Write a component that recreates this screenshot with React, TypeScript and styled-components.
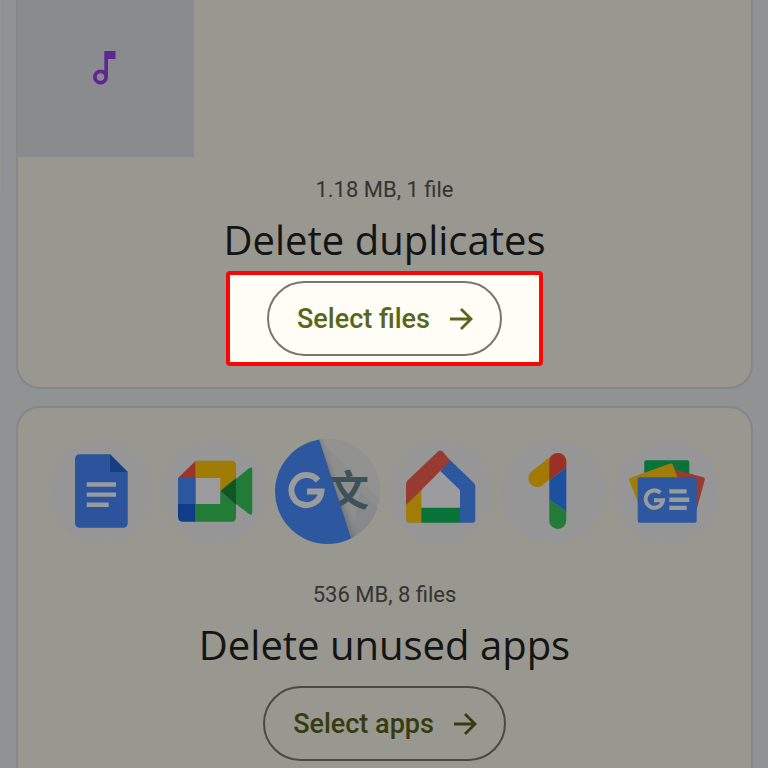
import type { ReactNode } from "react";
import styled, { createGlobalStyle } from "styled-components";

const GlobalStyle = createGlobalStyle`
  * { box-sizing: border-box; }
  body {
    margin: 0;
    background: #8f9393;
    font-family: Roboto, sans-serif;
  }
`;

const Page = styled.div`
  display: flex;
  gap: 13px;
  height: 100vh;
  overflow: hidden;
  padding-right: 15px;
`;

const PreviousPanel = styled.div`
  flex: none;
  width: 3px;
  height: 190px;
  background: #939490;
  border-right: 1px solid #8c8f8e;
`;

const CardList = styled.main`
  flex: 1;
  display: flex;
  flex-direction: column;
  gap: 17px;
  min-width: 0;
`;

const Card = styled.section<{ $continued?: boolean }>`
  flex: none;
  display: flex;
  flex-direction: column;
  align-items: center;
  padding: ${(p) => (p.$continued ? "0 0 21px" : "31px 0 21px")};
  border: 2px solid #868786;
  border-top-width: ${(p) => (p.$continued ? "0" : "2px")};
  border-radius: ${(p) => (p.$continued ? "0 0 24px 24px" : "24px")};
  background: #989790;
  overflow: hidden;
`;

const FileTile = styled.div`
  align-self: flex-start;
  display: flex;
  width: 176px;
  height: 157px;
  padding: 46px 0 0 69px;
  background: #898b8e;
`;

const AppRow = styled.div`
  display: flex;
  justify-content: center;
  gap: 8px;
  padding-right: 1px;
`;

const AppIcon = styled.svg`
  width: 105px;
  height: 105px;
`;

const Meta = styled.p<{ $gap: number }>`
  margin: ${(p) => p.$gap}px 0 0;
  font-size: 22px;
  line-height: 28px;
  color: #343430;
`;

const Title = styled.h2`
  margin: 8px 0 0;
  font-family: "Open Sans", sans-serif;
  font-size: 40px;
  line-height: 56px;
  font-weight: 400;
  color: #141414;
`;

const ActionFrame = styled.div<{ $highlighted?: boolean }>`
  margin-top: 3px;
  padding: 6px 37px;
  border: 4px solid ${(p) => (p.$highlighted ? "#fb0505" : "transparent")};
  border-radius: 4px;
  background: ${(p) => (p.$highlighted ? "#fffdf6" : "transparent")};
`;

const ActionButton = styled.button<{ $highlighted?: boolean }>`
  display: flex;
  align-items: center;
  gap: 18px;
  height: 75px;
  padding: 0 26px 0 28px;
  border: 2px solid ${(p) => (p.$highlighted ? "#77776b" : "#4a4a43")};
  border-radius: 38px;
  background: transparent;
  color: ${(p) => (p.$highlighted ? "#58661b" : "#353d10")};
  font-family: Roboto, sans-serif;
  font-size: 27px;
  font-weight: 500;
  line-height: 36px;
  white-space: nowrap;
`;

const Arrow = () => (
  <svg width="26" height="26" viewBox="0 0 26 26" fill="none" stroke="currentColor" strokeWidth="2.8" aria-hidden="true">
    <path d="M2 13H23M13 3L23 13L13 23" />
  </svg>
);

const MusicNote = () => (
  <svg width="34" height="44" viewBox="0 0 34 44" role="img" aria-label="Audio file">
    <circle cx="13.5" cy="31" r="5.6" fill="none" stroke="#5c2791" strokeWidth="3.8" />
    <path d="M17.3 5H28.5V13H21V31H17.3Z" fill="#5c2791" />
  </svg>
);

const Disc = () => <circle cx="52.5" cy="52.5" r="51.5" fill="#969697" />;

const DocsIcon = () => (
  <AppIcon viewBox="0 0 105 105" role="img" aria-label="Docs">
    <Disc />
    <path d="M31 15.3H61L78.7 33V84Q78.7 88.7 74 88.7H31Q26 88.7 26 84V20Q26 15.3 31 15.3Z" fill="#2b549c" />
    <path d="M61 15.3L78.7 33H61Z" fill="#173f80" />
    <path d="M37.7 43.3H67V47.7H37.7ZM37.7 53.4H67V57.8H37.7ZM37.7 63.6H59.7V68H37.7Z" fill="#989ba0" />
  </AppIcon>
);

const MeetIcon = () => (
  <AppIcon viewBox="0 0 105 105" role="img" aria-label="Meet">
    <Disc />
    <path d="M33.7 39H58.3V65H33.7Z" fill="#9b9b9d" />
    <path d="M33.7 21.7V39H16Z" fill="#9a352b" />
    <path d="M33.7 21.7H70Q74 21.7 74 26V40L58.3 52V39H33.7Z" fill="#a17c05" />
    <path d="M16 39H33.7V65H16Z" fill="#2c579f" />
    <path d="M16 65H33.7V82.7H21Q16 82.7 16 78Z" fill="#103d88" />
    <path d="M33.7 65H58.3V52L74 65V78Q74 82.7 70 82.7H33.7Z" fill="#237b38" />
    <path d="M74 40L87 29.3Q90.3 27 90.3 31V73Q90.3 77 87 75L74 65Z" fill="#237b38" />
    <path d="M58.3 52L74 39V65.5Z" fill="#0f5624" />
  </AppIcon>
);

const TranslateIcon = () => (
  <AppIcon viewBox="0 0 105 105" role="img" aria-label="Translate">
    <defs>
      <linearGradient id="foldShade" gradientUnits="userSpaceOnUse" x1="60" y1="50" x2="68" y2="47">
        <stop offset="0" stopColor="#66696c" stopOpacity="0.55" />
        <stop offset="1" stopColor="#85868a" stopOpacity="0" />
      </linearGradient>
      <clipPath id="discClip">
        <circle cx="52.5" cy="52.5" r="52.5" />
      </clipPath>
    </defs>
    <g clipPath="url(#discClip)">
      <path d="M0 0H105V105H0Z" fill="#8e8e8f" />
      <path d="M44 0L105 61V0Z" fill="#929291" />
      <path d="M85 52L105 72V105H76Z" fill="#88898a" />
      <path d="M44 0H64L100 105H76Z" fill="url(#foldShade)" />
      <text x="73" y="67" textAnchor="middle" fontFamily="Noto Sans CJK SC, sans-serif" fontWeight="700" fontSize="42" fill="#3d5158">
        文
      </text>
      <path d="M0 0H44L78 105H0Z" fill="#2d589f" />
      <path d="M43 41.5A15 15 0 1 0 46.4 52.5H32" fill="none" stroke="#9a9b9d" strokeWidth="6" />
    </g>
  </AppIcon>
);

const HomeIcon = () => (
  <AppIcon viewBox="0 0 105 105" role="img" aria-label="Home">
    <Disc />
    <path d="M33.3 50L52.3 31L72 51V69H33.3Z" fill="#9c9b9e" />
    <path d="M18 60L33.3 50V83.7H21Q18 83.7 18 80.7Z" fill="#a17c08" />
    <path d="M33.3 68.7H72V83.7H33.3Z" fill="#087338" />
    <path d="M61.5 20.5L86 44Q87.3 45.3 87.3 47V80.7Q87.3 83.7 84.3 83.7H72V51L52.3 32Z" fill="#2d589f" />
    <path d="M18 66V45Q18 43 19.5 41.5L50 12.5Q52.3 10.5 54.6 12.5L62.3 21.7L33.3 51Z" fill="#983b31" />
  </AppIcon>
);

const OneIcon = () => (
  <AppIcon viewBox="0 0 105 105" role="img" aria-label="Google One">
    <defs>
      <clipPath id="oneStem">
        <rect x="48.3" y="14" width="17" height="76" rx="8.5" />
      </clipPath>
    </defs>
    <Disc />
    <path d="M36 39.3L57 22.7" stroke="#a17a05" strokeWidth="17.4" strokeLinecap="round" />
    <g clipPath="url(#oneStem)">
      <path d="M48 14H66V28L48 41.5Z" fill="#9b3028" />
      <path d="M48 41.5L66 28V73L48 60.5Z" fill="#1e50a0" />
      <path d="M48 60.5L66 73V91H48Z" fill="#237b38" />
    </g>
  </AppIcon>
);

const NewsIcon = () => (
  <AppIcon viewBox="0 0 105 105" role="img" aria-label="News">
    <Disc />
    <rect x="30.3" y="21.3" width="45" height="30" rx="2" fill="#087338" />
    <path d="M61 30.5L88.5 38Q91.3 38.7 90.8 40.7L82.5 71L55 60Z" fill="#983b31" />
    <path d="M16.3 38.8L56.3 24.6Q58 24 58.7 25.6L66 45L25 66L15.2 41.5Q14.7 39.5 16.3 38.8Z" fill="#a17c08" />
    <rect x="23.7" y="38.3" width="59" height="45.4" rx="2" fill="#2d589f" />
    <path d="M46.4 53.8A8.7 8.7 0 1 0 49 61.3H40" fill="none" stroke="#9a9b9d" strokeWidth="4" />
    <path d="M55.3 50.2H72.7V54.4H55.3ZM55.3 58.6H75.3V63H55.3ZM55.3 66.8H72.7V71H55.3Z" fill="#9a9b9d" />
  </AppIcon>
);

type SuggestionProps = {
  meta: string;
  title: string;
  action: string;
  metaGap: number;
  highlighted?: boolean;
  continued?: boolean;
  children: ReactNode;
};

const Suggestion = ({ meta, title, action, metaGap, highlighted, continued, children }: SuggestionProps) => (
  <Card $continued={continued}>
    {children}
    <Meta $gap={metaGap}>{meta}</Meta>
    <Title>{title}</Title>
    <ActionFrame $highlighted={highlighted}>
      <ActionButton type="button" $highlighted={highlighted}>
        {action}
        <Arrow />
      </ActionButton>
    </ActionFrame>
  </Card>
);

export default function App() {
  return (
    <>
      <GlobalStyle />
      <Page>
        <PreviousPanel />
        <CardList>
          <Suggestion meta="1.18 MB, 1 file" title="Delete duplicates" action="Select files" metaGap={19} highlighted continued>
            <FileTile>
              <MusicNote />
            </FileTile>
          </Suggestion>
          <Suggestion meta="536 MB, 8 files" title="Delete unused apps" action="Select apps" metaGap={37}>
            <AppRow>
              <DocsIcon />
              <MeetIcon />
              <TranslateIcon />
              <HomeIcon />
              <OneIcon />
              <NewsIcon />
            </AppRow>
          </Suggestion>
        </CardList>
      </Page>
    </>
  );
}
